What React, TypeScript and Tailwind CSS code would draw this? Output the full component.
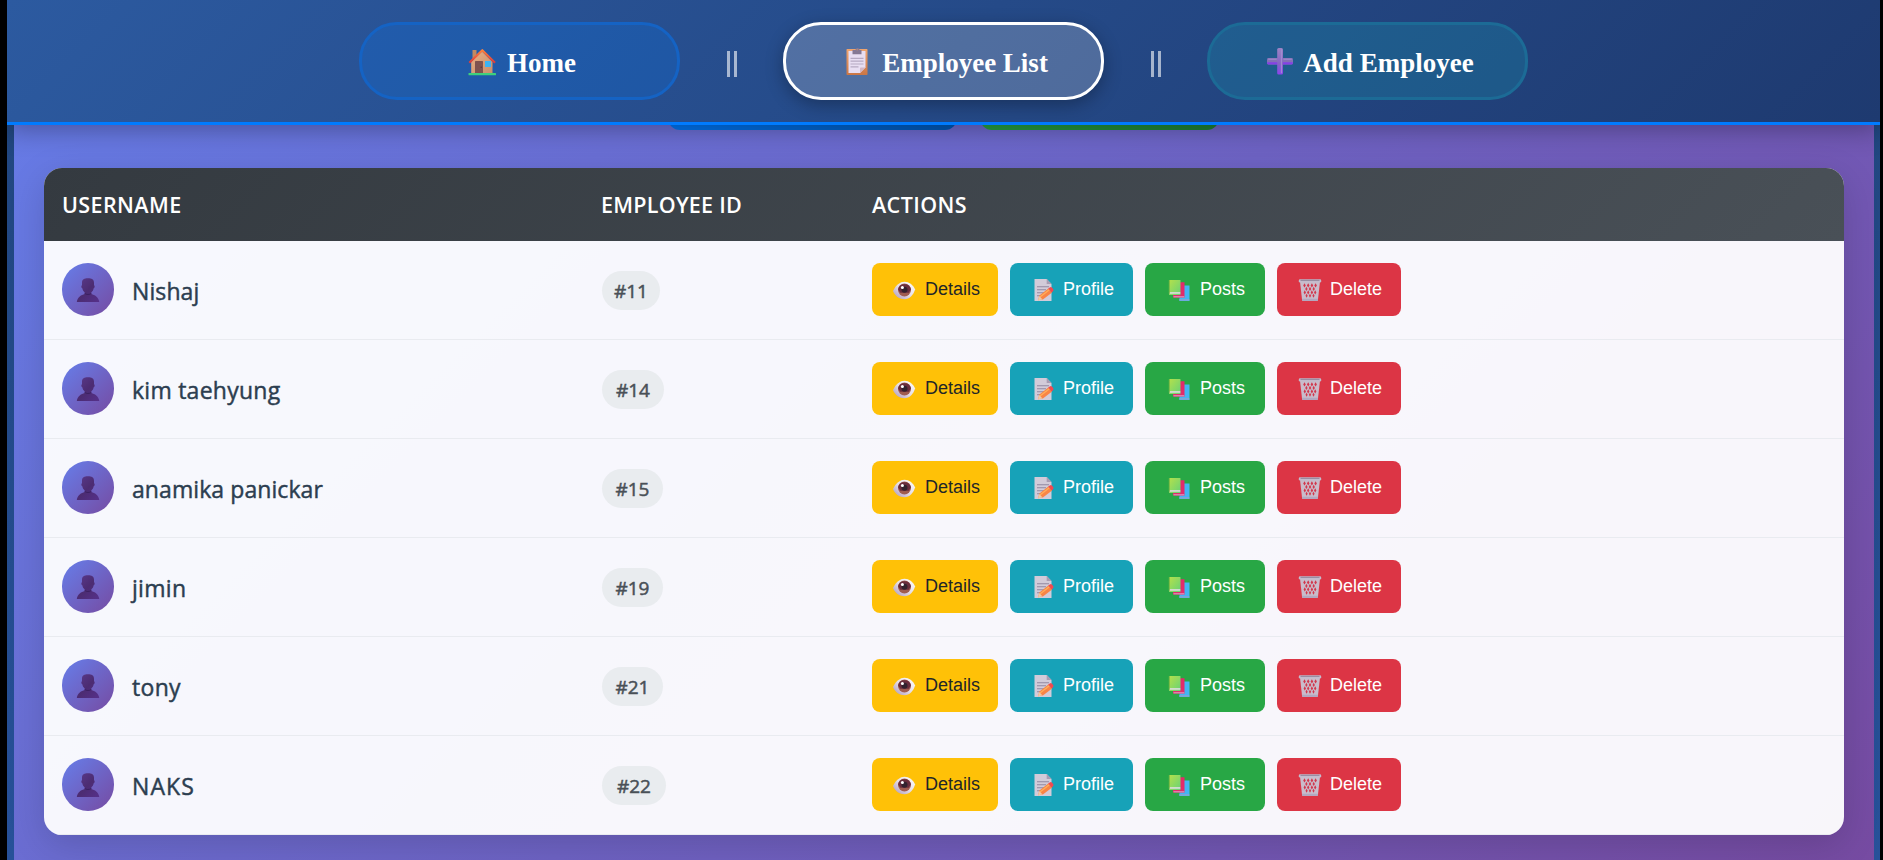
import React from 'react';

const employees = [
  { name: 'Nishaj', id: '#11', badge: 'w-[58px]', track: 'tracking-[0.1px]' },
  { name: 'kim taehyung', id: '#14', badge: 'w-[62px]', track: 'tracking-[0.25px]' },
  { name: 'anamika panickar', id: '#15', badge: 'w-[61px]', track: 'tracking-[0.08px]' },
  { name: 'jimin', id: '#19', badge: 'w-[61px]', track: 'tracking-[0.3px]' },
  { name: 'tony', id: '#21', badge: 'w-[61px]', track: 'tracking-[0.3px]' },
  { name: 'NAKS', id: '#22', badge: 'w-[64px]', track: 'tracking-[1.1px]' },
];

const HouseIcon = () => (
  <svg width="28" height="28" viewBox="0 0 28 28">
    <defs>
      <linearGradient id="wall" x1="0" y1="0" x2="1" y2="1">
        <stop offset="0" stopColor="#e9b184" />
        <stop offset="1" stopColor="#c98e6c" />
      </linearGradient>
      <linearGradient id="roof" x1="0" y1="0" x2="0" y2="1">
        <stop offset="0" stopColor="#ff823b" />
        <stop offset="1" stopColor="#dd3a3c" />
      </linearGradient>
    </defs>
    <rect x="4.5" y="2" width="4" height="9" fill="#c08a62" />
    <path d="M14 3.5 24.5 14V25.5H3.2V14Z" fill="url(#wall)" />
    <rect x="7" y="13" width="8" height="12.5" rx="0.6" fill="#80534f" />
    <circle cx="13.2" cy="19.3" r="0.7" fill="#5a3434" />
    <rect x="17" y="13" width="6" height="6" fill="#3cb4f4" />
    <path d="M1.3 14.8 14.3 2.2 27 14.8" fill="none" stroke="url(#roof)" strokeWidth="2.1" strokeLinejoin="round" />
    <rect x="0.5" y="25" width="27.5" height="2.3" rx="0.5" fill="#3fd07c" />
  </svg>
);

const ClipboardIcon = () => (
  <svg width="22" height="28" viewBox="0 0 22 28">
    <defs>
      <linearGradient id="board" x1="0" y1="0" x2="0" y2="1">
        <stop offset="0" stopColor="#efa570" />
        <stop offset="1" stopColor="#cb7645" />
      </linearGradient>
    </defs>
    <rect x="0.5" y="2" width="21" height="26" rx="0.7" fill="url(#board)" />
    <path d="M2.5 4h17v16.6L14 26H2.5Z" fill="#e8def2" />
    <path d="M19.5 20.6 14 26V21.4q0-.8.8-.8Z" fill="#d3b6c4" />
    <path d="M4.5 11.4h13M4.5 14.2h13M4.5 17h13M4.5 19.8h8" stroke="#b5a9c2" strokeWidth="1.2" />
    <path d="M6.5 3h3a2 2 0 0 1 4 0h2v4.2h-9Z" fill="#857894" />
    <circle cx="11.2" cy="2.8" r="0.8" fill="#c08a70" />
  </svg>
);

const PlusIcon = () => (
  <svg width="28" height="28" viewBox="0 0 28 28">
    <defs>
      <linearGradient id="plus" x1="0" y1="0" x2="0" y2="1">
        <stop offset="0" stopColor="#9b83c4" />
        <stop offset="0.6" stopColor="#8663c6" />
        <stop offset="1" stopColor="#8c43ee" />
      </linearGradient>
    </defs>
    <rect x="1" y="11" width="26" height="6.5" rx="1.4" fill="#8470b6" />
    <path d="M1.2 15.2h25.6v1.2q0 1.1-1.4 1.1H2.6q-1.4 0-1.4-1.1Z" fill="#8540e6" />
    <rect x="11.2" y="1" width="5.8" height="26.5" rx="1.5" fill="url(#plus)" />
    <path d="M15.4 2.2v24M2.2 12.2h8.5M17.4 12.2h8.4" stroke="#a18ed0" strokeWidth="1" fill="none" />
  </svg>
);

const PersonIcon = () => (
  <svg width="24" height="26" viewBox="0 0 24 26">
    <defs>
      <linearGradient id="bust" x1="0" y1="0" x2="1" y2="1">
        <stop offset="0" stopColor="#5a3a8c" />
        <stop offset="0.5" stopColor="#4c2c72" />
        <stop offset="1" stopColor="#56308a" />
      </linearGradient>
    </defs>
    <path
      d="M12 1.2c3.8 0 5.9 1 6 4.6v2.5c1 .2.9 2.6-.3 3-.3 1.8-1.2 3.2-2.4 4.1v1.5c3.4 1.2 7.2 2.5 8 8.2H.8c.8-5.7 4.5-7 7.9-8.2v-1.5c-1.2-.9-2.1-2.3-2.4-4.1-1.2-.4-1.3-2.8-.3-3V5.8c.1-3.6 2.2-4.6 6-4.6Z"
      fill="url(#bust)"
    />
    <path d="M8.7 16q3.3 2.2 6.6 0v.9q-3.3 2.3-6.6 0Z" fill="#3c2160" />
  </svg>
);

const EyeIcon = () => (
  <svg width="24" height="22" viewBox="0 0 24 22">
    <defs>
      <linearGradient id="eyeball" x1="0" y1="1" x2="1" y2="0">
        <stop offset="0" stopColor="#a893ba" />
        <stop offset="0.5" stopColor="#e6dfe8" />
        <stop offset="1" stopColor="#ffffff" />
      </linearGradient>
    </defs>
    <path d="M1 12C3.8 6.2 8 2.8 12.5 2.8c4.5 0 8.5 3 10.6 7.6-1.8 5.7-5.6 9.8-10.6 9.8-5 0-9.2-2.7-11.5-8.2Z" fill="url(#eyeball)" />
    <circle cx="12.5" cy="11" r="6.5" fill="#a05c50" />
    <path d="M6.1 10.5a6.5 6.5 0 0 1 12.8 0l-2.2 3.2H8.3Z" fill="#692d3d" />
    <circle cx="12.5" cy="10.7" r="3" fill="#32222e" />
    <circle cx="10.4" cy="8.4" r="1.5" fill="#fff" />
  </svg>
);

const MemoIcon = () => (
  <svg width="22" height="24" viewBox="0 0 22 24">
    <path d="M1.5 1h12.2L18.5 6v17H1.5Z" fill="#d2cbd9" />
    <path d="M13.7 1v5h4.8Z" fill="#a79cb3" />
    <path d="M4 8.8h12M4 11.8h9M4 14.8h7M4 17.8h4" stroke="#9289a1" strokeWidth="1.1" />
    <path d="m5 22.3 1.4-4.7 9.2-7.3 3.5 4.1-9.2 7Z" fill="#f98446" />
    <path d="m7 19 10-7.7" stroke="#ffb05a" strokeWidth="1.2" />
    <path d="m15.3 10.6 1.5-1.2q1.3-.8 2.5.5l.9 1.1q.8 1.3-.4 2.4l-1.3 1Z" fill="#f04a51" />
    <path d="m5 22.3 1.3-4.4 3.2 3.5Z" fill="#efc9a5" />
  </svg>
);

const BooksIcon = () => (
  <svg width="23" height="24" viewBox="0 0 23 24">
    <defs>
      <linearGradient id="green" x1="0" y1="0" x2="1" y2="1">
        <stop offset="0" stopColor="#b5e04b" />
        <stop offset="1" stopColor="#67d276" />
      </linearGradient>
    </defs>
    <path d="M14 7.5h7.5V23H11.5V19Z" fill="#43b5f4" />
    <path d="M11.3 21h10v1.8h-10Z" fill="#7aa7d8" />
    <path d="M10 4.2h6.5v15.3H5V17Z" fill="#e22b6a" />
    <path d="M5.5 18h10.8v1.5H5.5Z" fill="#dc80ad" />
    <rect x="1" y="2" width="11.5" height="15" rx="0.6" fill="url(#green)" />
    <path d="M1 14.2h11.3v1.5H1Z" fill="#e4dde8" />
    <path d="M1.3 2.2v13.6" stroke="#72b744" strokeWidth="1" />
  </svg>
);

const TrashIcon = () => (
  <svg width="24" height="24" viewBox="0 0 24 24">
    <path d="M2 3.5h20l-2.1 18.7q-.1.8-1 .8H5.1q-.9 0-1-.8Z" fill="#c9bccb" />
    <g fill="#d2384d">
      <path d="m6.5 5.2 1.3 2.2-1.3 2.2-1.3-2.2ZM10.2 5.2l1.3 2.2-1.3 2.2-1.3-2.2ZM13.900 5.2l1.3 2.2-1.3 2.2-1.3-2.2ZM17.600 5.2l1.3 2.2-1.3 2.2-1.3-2.2Z" />
      <path d="m8.4 8.7 1.2 2.2-1.2 2.2-1.2-2.2ZM12 8.7l1.2 2.2-1.2 2.2-1.2-2.2ZM15.700 8.7l1.2 2.2-1.2 2.2-1.2-2.2Z" />
      <path d="m6.8 12.2 1.2 2.2-1.2 2.2-1.2-2.2ZM10.2 12.2l1.2 2.2-1.2 2.2L9 14.4ZM13.900 12.2l1.2 2.2-1.2 2.2-1.2-2.2ZM17.2 12.2l1.2 2.2-1.2 2.2-1.2-2.2Z" />
      <path d="m8.6 15.7 1.1 2-1.1 2-1.1-2ZM12 15.7l1.1 2-1.1 2-1.1-2ZM15.5 15.7l1.1 2-1.1 2-1.1-2Z" />
    </g>
    <path d="M4 20.7h16l-.3 1.7q-.1.7-1 .7H5.3q-.9 0-1-.7Z" fill="#b3a8c0" />
    <rect x="0.8" y="1.2" width="22.4" height="3.2" rx="1.2" fill="#c4bbcc" />
    <path d="M2.5 2.3h19" stroke="#8f8298" strokeWidth="1" />
  </svg>
);

const actions = [
  { label: 'Details', icon: <EyeIcon />, cls: 'w-[126px] bg-[#ffc107] text-[#212529]', slot: 'w-[53px] pl-[20px]' },
  { label: 'Profile', icon: <MemoIcon />, cls: 'w-[123px] bg-[#17a2b8] text-white', slot: 'w-[53px] pl-[23px]' },
  { label: 'Posts', icon: <BooksIcon />, cls: 'w-[120px] bg-[#28a745] text-white', slot: 'w-[55px] pl-[23px]' },
  { label: 'Delete', icon: <TrashIcon />, cls: 'w-[124px] bg-[#dc3545] text-white', slot: 'w-[53px] pl-[21px]' },
];

const navBase =
  "flex h-[78px] w-[321px] items-center justify-center rounded-[38px] border-[3px] pt-[4px] pl-[5px] font-['Liberation_Serif',serif] text-[27px] font-bold text-white";

const Separator = () => (
  <span className="flex w-[103px] justify-center gap-[4px] pt-[5px]" aria-hidden="true">
    <span className="h-[26px] w-[3px] bg-white/60" />
    <span className="h-[26px] w-[3px] bg-white/60" />
  </span>
);

export default function App() {
  return (
    <div className="h-[860px] w-[1883px] overflow-hidden bg-black pr-[3px] pl-[7px] font-['Open_Sans','Noto_Sans',sans-serif]">
      <nav className="relative z-10 flex h-[125px] items-center justify-center border-b-[3px] border-[#007bff] bg-linear-[135deg,#2c5aa0,#1e3a70] shadow-[0_5px_24px_rgba(0,0,0,0.3)]">
        <a className={`${navBase} border-[#1563c4] bg-[#007bff]/20`}>
          <span className="mr-[11px] -mt-[3px]"><HouseIcon /></span>
          <span>Home</span>
        </a>
        <Separator />
        <a className={`${navBase} border-white bg-white/20 pl-[7px] shadow-[0_5px_18px_rgba(0,0,0,0.3)]`}>
          <span className="mr-[14px] -mt-[4px]"><ClipboardIcon /></span>
          <span>Employee List</span>
        </a>
        <Separator />
        <a className={`${navBase} border-[#1c6b96] bg-[#17a2b8]/25`}>
          <span className="mr-[9px] -mt-[4px]"><PlusIcon /></span>
          <span>Add Employee</span>
        </a>
      </nav>

      <div className="-mt-[48px] h-[783px] bg-linear-to-b from-[#21467e] to-[#275199] pr-[6px] pl-[7px]">
        <main className="h-full bg-linear-[135deg,#667be6,#764ba2] px-[30px]">
          <div className="flex justify-center gap-[23px] pr-[2px]">
            <div className="h-[53px] w-[289px] rounded-[12px] bg-linear-[135deg,#007bff,#0056b3]" />
            <div className="h-[53px] w-[239px] rounded-[12px] bg-linear-[135deg,#28a745,#1e7e34]" />
          </div>

          <section className="mt-[38px] w-[1800px] overflow-hidden rounded-[18px] bg-white/95 shadow-[0_10px_36px_rgba(0,0,0,0.15)]">
            <header className="grid h-[73px] grid-cols-[540px_270px_1fr] items-center bg-linear-[135deg,#343a40,#495057] px-[17px] pt-[2px] text-[21.5px] font-semibold tracking-[0.4px] text-white">
              <span className="pl-px">USERNAME</span>
              <span className="tracking-[0.25px]">EMPLOYEE ID</span>
              <span className="pl-px">ACTIONS</span>
            </header>
            {employees.map((e) => (
              <div key={e.id} className="grid h-[99px] grid-cols-[540px_270px_1fr] items-center border-b border-[#e9ebf0] px-[18px]">
                <div className="flex items-center gap-[18px]">
                  <span className="-mt-px flex h-[53px] w-[52px] items-center justify-center rounded-full bg-linear-[135deg,#667eea,#764ba2]">
                    <PersonIcon />
                  </span>
                  <span className={`pt-[3px] text-[23px] font-medium text-[#2c3e50] [-webkit-text-stroke:0.45px_#2c3e50] ${e.track}`}>{e.name}</span>
                </div>
                <div>
                  <span className={`${e.badge} mt-px flex h-[39px] items-center justify-center rounded-[20px] bg-[#e9ecef] pt-[2px] text-[19px] font-medium text-[#495057] [-webkit-text-stroke:0.5px_#495057]`}>
                    {e.id}
                  </span>
                </div>
                <div className="-mt-px flex gap-[12px]">
                  {actions.map((a) => (
                    <button
                      key={a.label}
                      className={`${a.cls} flex h-[53px] items-center rounded-[8px] font-['Liberation_Sans',Arial,sans-serif] text-[18px]`}
                    >
                      <span className={`${a.slot} shrink-0 pt-px`}>{a.icon}</span>
                      <span className="-mt-px">{a.label}</span>
                    </button>
                  ))}
                </div>
              </div>
            ))}
          </section>
        </main>
      </div>
    </div>
  );
}
